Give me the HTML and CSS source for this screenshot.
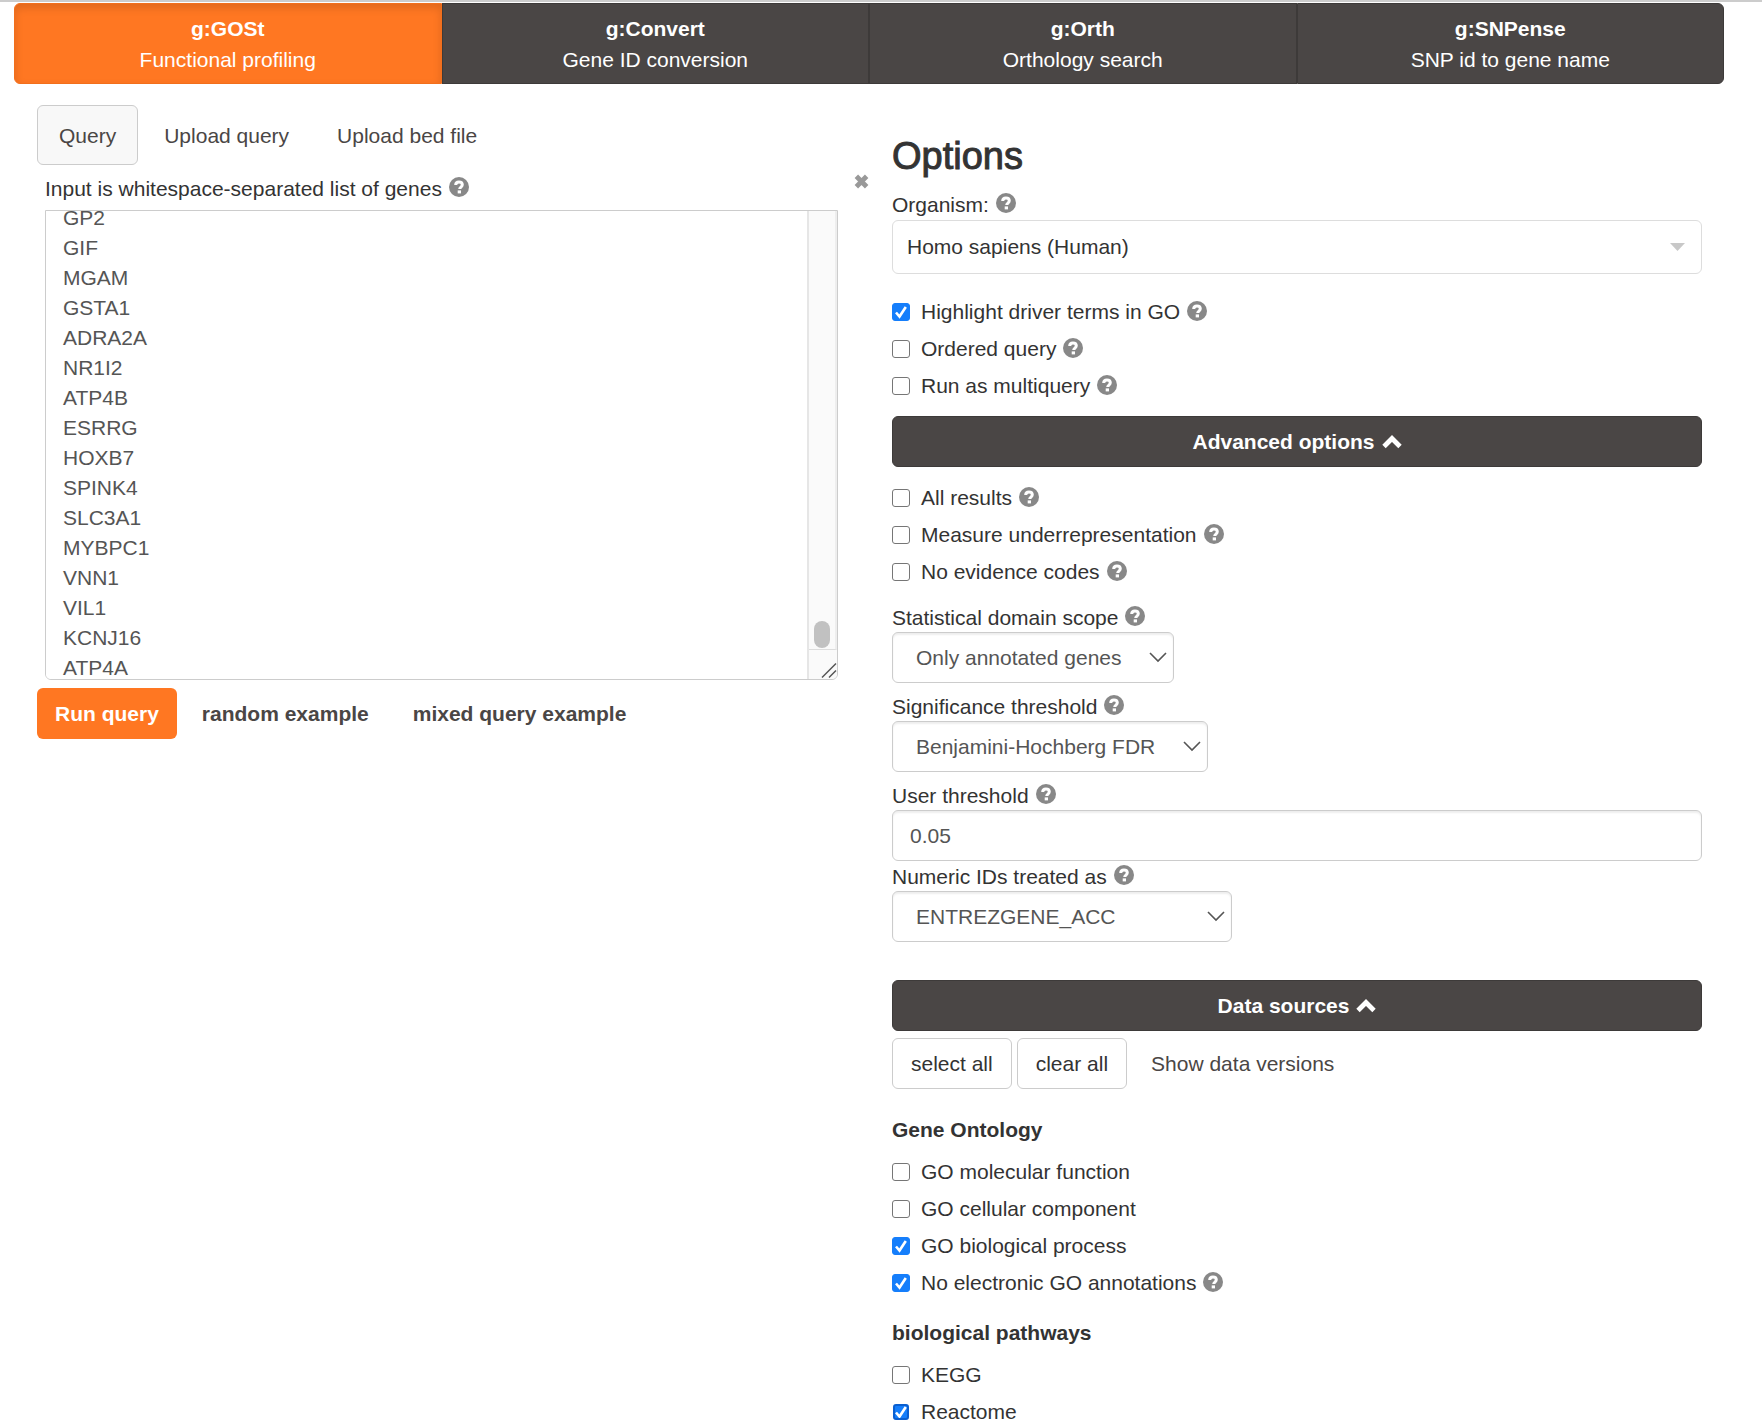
FILE: index.html
```html
<!DOCTYPE html>
<html lang="en">
<head>
<meta charset="utf-8">
<title>g:Profiler</title>
<link rel="stylesheet" href="styles.css">
</head>
<body>
<svg width="0" height="0" class="sprite" aria-hidden="true">
  <symbol id="help" viewBox="0 0 20 20">
    <circle cx="10" cy="10" r="10" fill="#888"/>
    <path d="M6.700 8C6.700 5.900 8 5 9.900 5s3.400 1 3.400 2.800c0 2.300-2.600 2.200-2.600 4.300" fill="none" stroke="#fff" stroke-width="3"/>
    <rect x="8.700" y="13.400" width="3.300" height="3" fill="#fff"/>
  </symbol>
  <symbol id="up" viewBox="0 0 20 14">
    <path d="M2 11.500L10 3.500l8 8" fill="none" stroke="#fff" stroke-width="4.800"/>
  </symbol>
</svg>

<nav class="tools">
  <a class="tool active" href="#gost"><strong>g:GOSt</strong><span>Functional profiling</span></a>
  <a class="tool" href="#convert"><strong>g:Convert</strong><span>Gene ID conversion</span></a>
  <a class="tool" href="#orth"><strong>g:Orth</strong><span>Orthology search</span></a>
  <a class="tool" href="#snpense"><strong>g:SNPense</strong><span>SNP id to gene name</span></a>
</nav>

<main class="columns">
  <section class="query">
    <div class="tabs">
      <button type="button" class="tab selected">Query</button>
      <button type="button" class="tab">Upload query</button>
      <button type="button" class="tab">Upload bed file</button>
    </div>
    <div class="input-row">
      <div class="input-main">
        <div class="field-label"><label for="genes">Input is whitespace-separated list of genes</label><svg class="help"><use href="#help"/></svg></div>
        <div class="genes-box">
          <textarea id="genes" class="genes" spellcheck="false">GP2
GIF
MGAM
GSTA1
ADRA2A
NR1I2
ATP4B
ESRRG
HOXB7
SPINK4
SLC3A1
MYBPC1
VNN1
VIL1
KCNJ16
ATP4A</textarea>
          <div class="scrollbar" aria-hidden="true">
            <div class="track"><div class="thumb"></div></div>
            <svg class="grip" viewBox="0 0 28 28"><path d="M13 27L27 13M20 27l7-7" stroke="#555" stroke-width="1.500" fill="none"/></svg>
          </div>
        </div>
      </div>
      <button type="button" class="clear" aria-label="Clear input"><svg viewBox="0 0 16 16"><path d="M2.500 2.500l11 11M13.500 2.500l-11 11" stroke="#999" stroke-width="5.200"/></svg></button>
    </div>
    <div class="actions">
      <button type="button" class="btn run">Run query</button>
      <button type="button" class="btn text">random example</button>
      <button type="button" class="btn text">mixed query example</button>
    </div>
  </section>

  <section class="options">
    <h1>Options</h1>
    <div class="field-label"><label for="organism">Organism:</label><svg class="help"><use href="#help"/></svg></div>
    <select id="organism" class="organism"><option>Homo sapiens (Human)</option></select>

    <div class="checks basic">
      <div class="check"><input type="checkbox" id="c1" checked><label for="c1">Highlight driver terms in GO</label><svg class="help"><use href="#help"/></svg></div>
      <div class="check"><input type="checkbox" id="c2"><label for="c2">Ordered query</label><svg class="help"><use href="#help"/></svg></div>
      <div class="check"><input type="checkbox" id="c3"><label for="c3">Run as multiquery</label><svg class="help"><use href="#help"/></svg></div>
    </div>

    <button type="button" class="bar">Advanced options<svg class="up"><use href="#up"/></svg></button>
    <div class="checks advanced">
      <div class="check"><input type="checkbox" id="c4"><label for="c4">All results</label><svg class="help"><use href="#help"/></svg></div>
      <div class="check"><input type="checkbox" id="c5"><label for="c5">Measure underrepresentation</label><svg class="help"><use href="#help"/></svg></div>
      <div class="check"><input type="checkbox" id="c6"><label for="c6">No evidence codes</label><svg class="help"><use href="#help"/></svg></div>
    </div>

    <div class="field">
      <div class="field-label"><label for="scope">Statistical domain scope</label><svg class="help"><use href="#help"/></svg></div>
      <select id="scope" class="control"><option>Only annotated genes</option></select>
    </div>
    <div class="field">
      <div class="field-label"><label for="significance">Significance threshold</label><svg class="help"><use href="#help"/></svg></div>
      <select id="significance" class="control"><option>Benjamini-Hochberg FDR</option></select>
    </div>
    <div class="field tight">
      <div class="field-label"><label for="threshold">User threshold</label><svg class="help"><use href="#help"/></svg></div>
      <input type="text" id="threshold" class="control" value="0.05">
    </div>
    <div class="field">
      <div class="field-label"><label for="numeric">Numeric IDs treated as</label><svg class="help"><use href="#help"/></svg></div>
      <select id="numeric" class="control numeric"><option>ENTREZGENE_ACC</option></select>
    </div>

    <button type="button" class="bar sources">Data sources<svg class="up"><use href="#up"/></svg></button>
    <div class="source-actions">
      <button type="button" class="btn outline">select all</button>
      <button type="button" class="btn outline">clear all</button>
      <button type="button" class="btn versions">Show data versions</button>
    </div>

    <h2>Gene Ontology</h2>
    <div class="checks">
      <div class="check"><input type="checkbox" id="s1"><label for="s1">GO molecular function</label></div>
      <div class="check"><input type="checkbox" id="s2"><label for="s2">GO cellular component</label></div>
      <div class="check"><input type="checkbox" id="s3" checked><label for="s3">GO biological process</label></div>
      <div class="check"><input type="checkbox" id="s4" checked><label for="s4">No electronic GO annotations</label><svg class="help"><use href="#help"/></svg></div>
    </div>
    <h2>biological pathways</h2>
    <div class="checks">
      <div class="check"><input type="checkbox" id="s5"><label for="s5">KEGG</label></div>
      <div class="check"><input type="checkbox" id="s6" class="pressed" checked><label for="s6">Reactome</label></div>
    </div>
  </section>
</main>
<script src="script.js"></script>
</body>
</html>
```
FILE: styles.css
```css
* { box-sizing: border-box; }

body {
  margin: 0;
  border-top: 2px solid #ccc;
  background: #fff;
  color: #333;
  font: 21px/30px "Liberation Sans", Arial, Helvetica, sans-serif;
}

button, input, select, textarea { font: inherit; margin: 0; }
button { cursor: pointer; }
.sprite { position: absolute; }

/* tool navigation */
.tools {
  display: grid;
  grid-template-columns: repeat(4, 1fr);
  margin: 1px 38px 0 14px;
}
.tool {
  display: flex;
  flex-direction: column;
  align-items: center;
  padding: 9px 18px 8px;
  border: 1px solid #3d3a39;
  background: #4a4645;
  color: #fff;
  line-height: 31px;
  text-decoration: none;
}
.tool:first-child { border-radius: 6px 0 0 6px; }
.tool:last-child { border-radius: 0 6px 6px 0; }
.tool.active {
  border-color: #f26f1c;
  background: #ff7722;
  box-shadow: inset 0 4px 8px rgba(0, 0, 0, .13);
}

.columns {
  display: grid;
  grid-template-columns: 1fr 1fr;
  margin: 21px 60px 0 37px;
  column-gap: 45px;
}

/* query column */
.tabs { display: flex; gap: 4px; }
.tab {
  height: 60px;
  padding: 2px 21px 0;
  border: 1px solid transparent;
  border-radius: 6px;
  background: none;
  color: #4a4645;
}
.tab.selected {
  border-color: #ccc;
  background: #f8f8f8;
}
.input-row {
  display: flex;
  gap: 16px;
  margin: 9px -22px 0 8px;
}
.input-main { flex: 1; min-width: 0; }
.field-label {
  display: flex;
  align-items: center;
  gap: 7px;
}
.help {
  flex: none;
  width: 20px;
  height: 20px;
  margin-bottom: 4px;
}
.genes-box {
  display: flex;
  height: 470px;
  margin-top: 6px;
  border: 1px solid #ccc;
  border-radius: 0 0 6px 6px;
  overflow: hidden;
}
.genes {
  flex: 1;
  min-width: 0;
  padding: 9px 17px;
  border: 0;
  outline: 0;
  resize: none;
  overflow: hidden;
  background: #fff;
  color: #555;
}
.scrollbar {
  display: flex;
  flex-direction: column;
  width: 30px;
  border-left: 2px solid #e6e6e6;
  background: #fafafa;
}
.track {
  display: flex;
  flex: 1;
  flex-direction: column;
  align-items: center;
  justify-content: flex-end;
  padding-bottom: 1px;
  border-right: 2px solid #eee;
  border-bottom: 1px solid #ddd;
}
.thumb {
  width: 16px;
  height: 27px;
  border-radius: 8px;
  background: #c1c1c1;
}
.grip { width: 28px; height: 29px; }
.clear {
  align-self: flex-start;
  display: flex;
  width: 15px;
  height: 15px;
  padding: 0;
  border: 0;
  background: none;
}
.clear svg { width: 15px; height: 15px; }
.actions { display: flex; gap: 6px; margin-top: 8px; }

/* buttons */
.btn {
  height: 51px;
  padding: 0 18px;
  border: 1px solid transparent;
  border-radius: 6px;
  background: none;
  color: #4a4645;
}
.btn.run { padding: 0 17px; background: #ff7722; color: #fff; font-weight: bold; }
.btn.text { font-weight: bold; }
.btn.outline { border-color: #ccc; background: #fff; color: #333; }
.bar {
  display: flex;
  align-items: center;
  justify-content: center;
  gap: 7px;
  width: 100%;
  height: 51px;
  border: 1px solid #3d3a39;
  border-radius: 6px;
  background: #4a4645;
  color: #fff;
  font-weight: bold;
}
.up { width: 20px; height: 14px; }
.bar.sources { margin-top: 38px; }
.source-actions { display: flex; gap: 5px; margin-top: 7px; }

/* options column */
h1 {
  margin: 31px 0 14px;
  font-size: 38px;
  font-weight: normal;
  line-height: 40px;
  -webkit-text-stroke: 1px #333;
}
h2 {
  margin: 26px 0 12px;
  font-size: 21px;
  line-height: 30px;
}
.checks + h2 { margin-top: 20px; }
select { appearance: none; }
.organism {
  width: 100%;
  height: 54px;
  padding: 0 14px;
  border: 1px solid #ddd;
  border-radius: 6px;
  background: #fff url("data:image/svg+xml,%3Csvg xmlns='http://www.w3.org/2000/svg' width='15' height='8'%3E%3Cpath d='M0 0h15L7.500 8z' fill='%23c8c8c8'/%3E%3C/svg%3E") no-repeat right 16px center;
  color: #333;
}
.checks { display: flex; flex-direction: column; gap: 7px; }
.checks.basic { margin: 23px 0 15px; }
.checks.advanced { margin: 16px 0 15px; }
.check { display: flex; align-items: center; height: 30px; }
.check label { margin-left: 11px; }
.check .help { margin: 0 0 2px 7px; }
.check input {
  appearance: none;
  flex: none;
  width: 18px;
  height: 18px;
  border: 1px solid #767676;
  border-radius: 3px;
  background: #fff;
}
.check input:checked {
  border-color: #157efb;
  background: #157efb url("data:image/svg+xml,%3Csvg xmlns='http://www.w3.org/2000/svg' width='16' height='16'%3E%3Cpath d='M3 8.500l3.500 4L12.800 3' fill='none' stroke='%23fff' stroke-width='2.600'/%3E%3C/svg%3E") no-repeat center;
}
.check input.pressed:checked { width: 16px; height: 16px; margin: 1px; border: 2px solid #0a5fd0; }

.field .field-label { height: 30px; padding-top: 2px; }
.field .help { margin-bottom: 4px; }
.field + .field { margin-top: 8px; }
.field.tight + .field { margin-top: 0; }
.control {
  display: block;
  height: 51px;
  padding: 0 17px;
  border: 1px solid #ccc;
  border-radius: 6px;
  background-color: #fff;
  box-shadow: inset 0 2px 2px rgba(0, 0, 0, .07);
  color: #555;
}
input.control { width: 100%; }
select.control {
  padding: 0 51px 0 23px;
  background-image: url("data:image/svg+xml,%3Csvg xmlns='http://www.w3.org/2000/svg' width='18' height='11'%3E%3Cpath d='M1 1l8 8L17 1' fill='none' stroke='%23555' stroke-width='1.600'/%3E%3C/svg%3E");
  background-repeat: no-repeat;
  background-position: right 6px center;
}
select.numeric { min-width: 340px; }
```
FILE: script.js
```js
// Start the gene list scrolled towards its end.
document.getElementById("genes").scrollTop = 17;
```
